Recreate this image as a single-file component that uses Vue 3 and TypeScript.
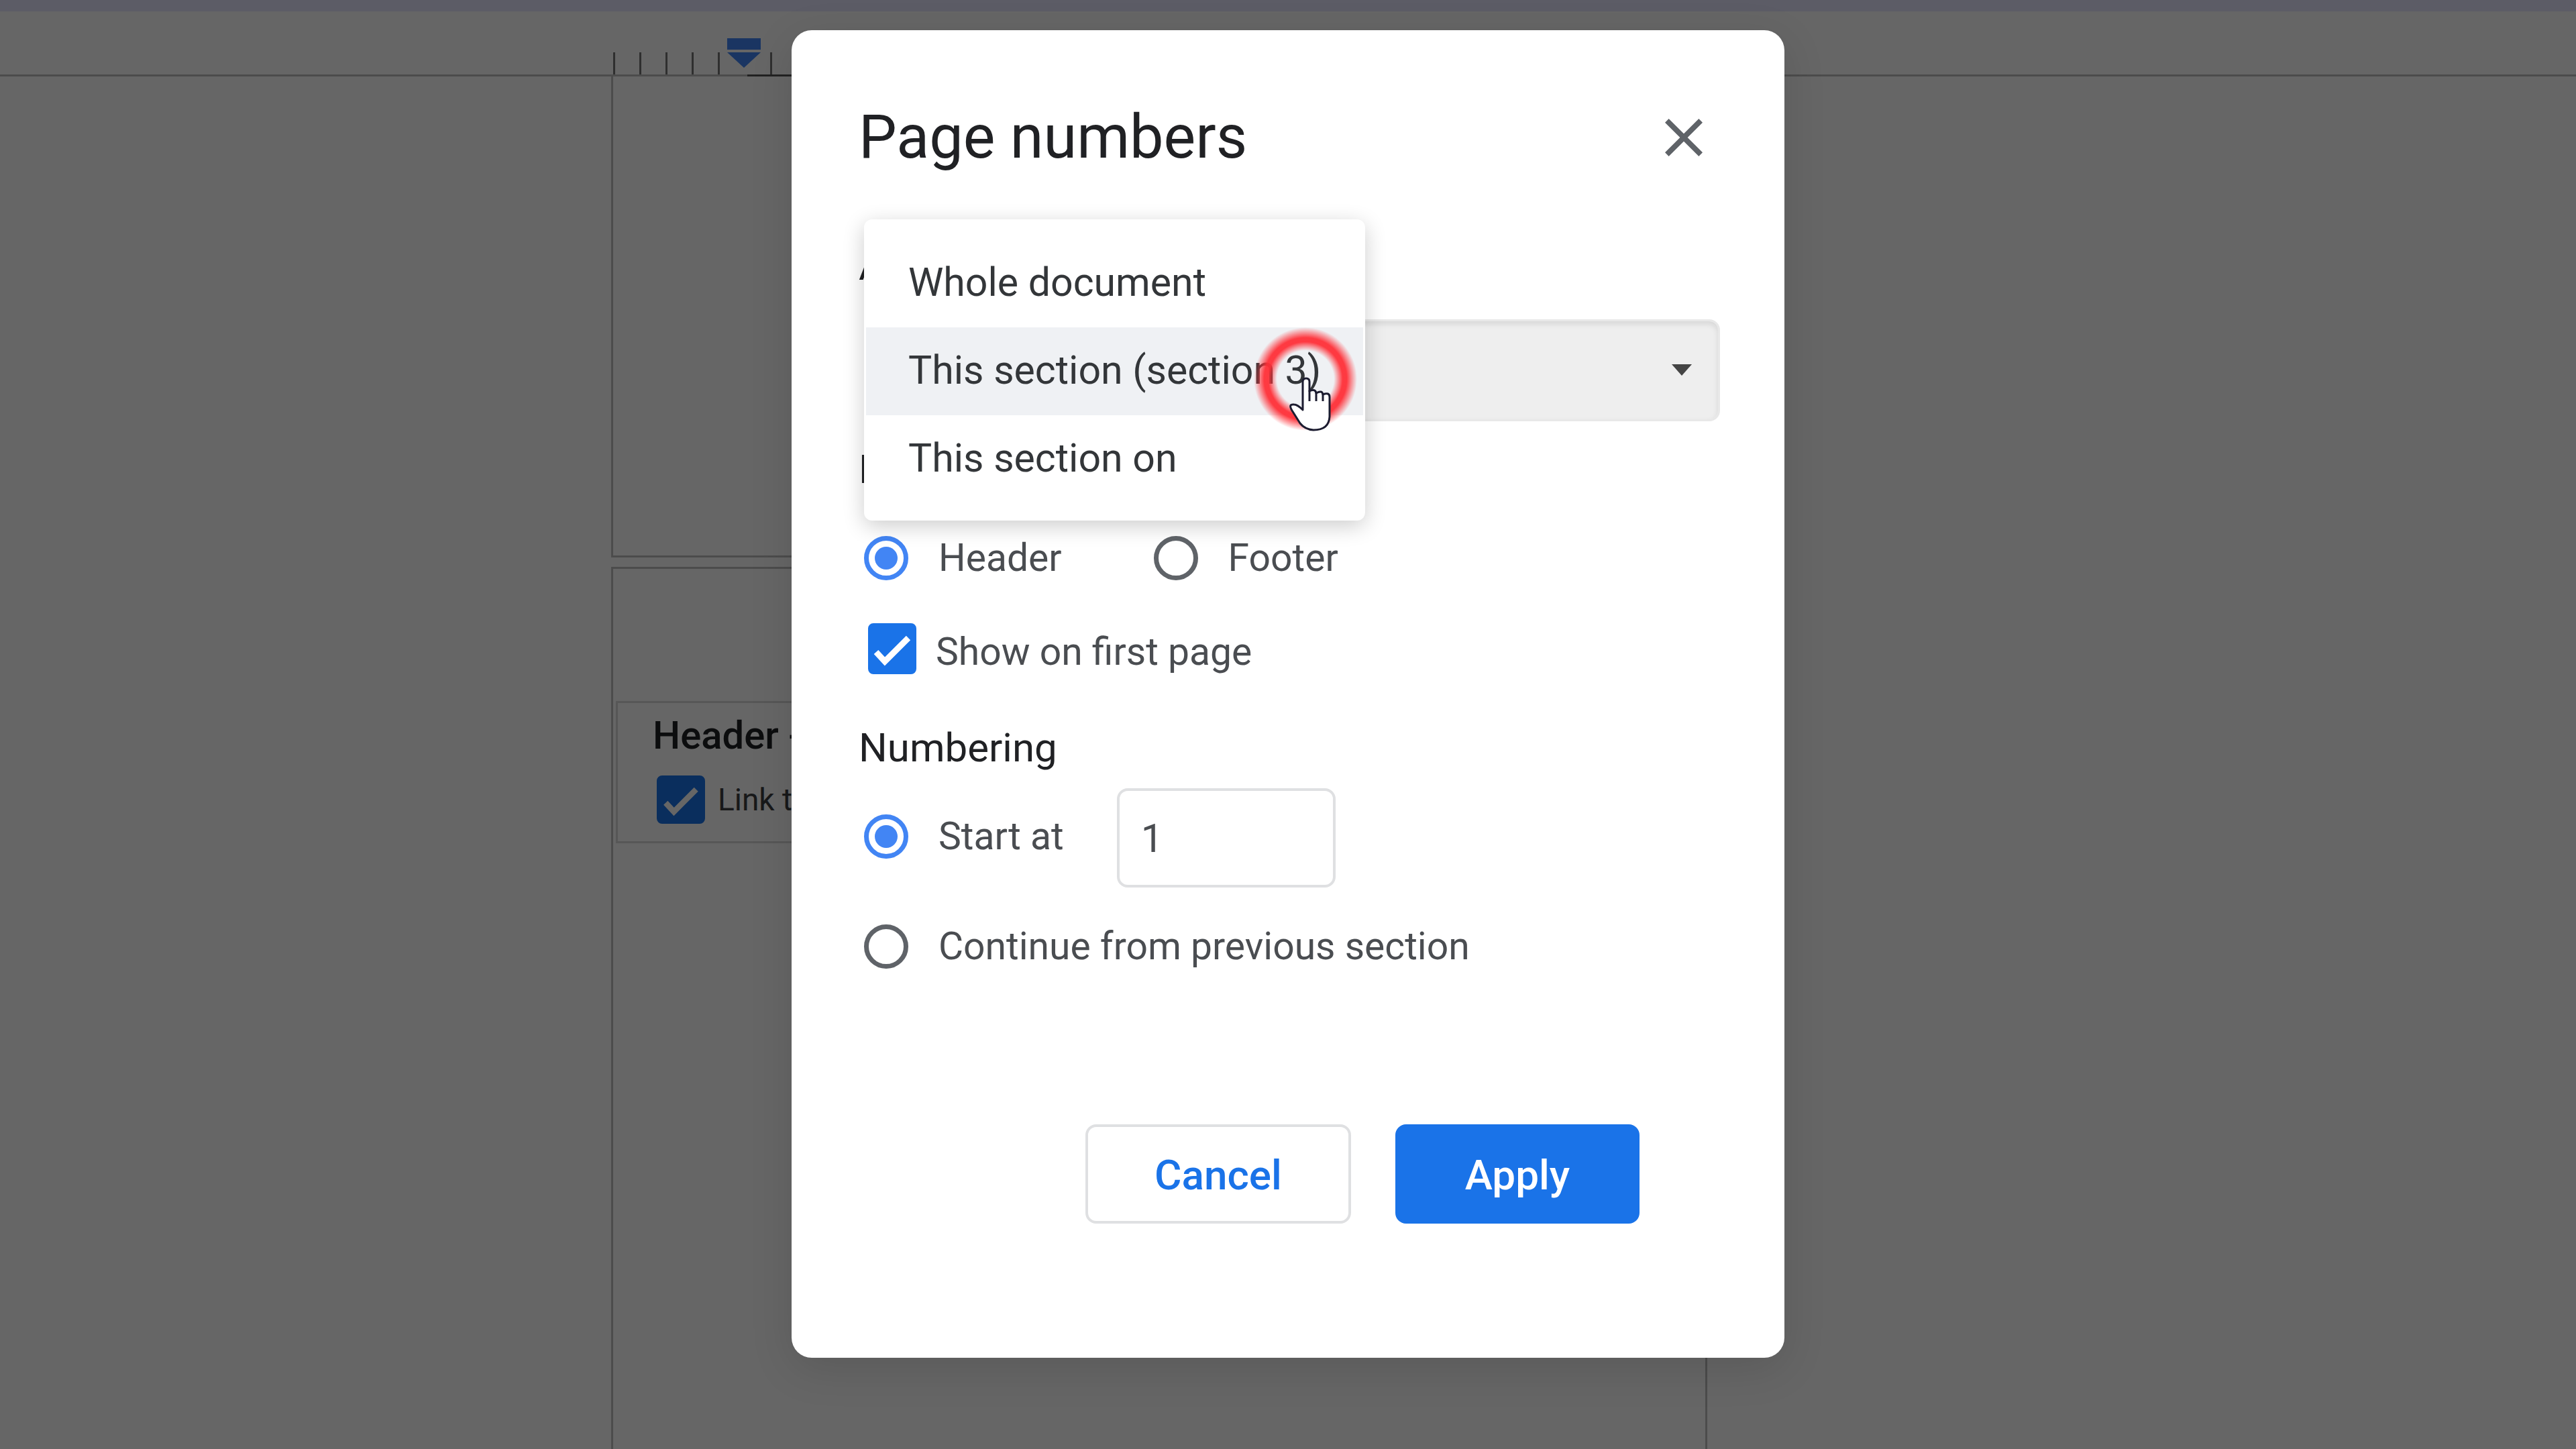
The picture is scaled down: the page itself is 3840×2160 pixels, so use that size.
<script setup lang="ts">
import { ref } from 'vue'

type Scope = 'whole' | 'section' | 'onward'

const scopes: { value: Scope; label: string }[] = [
  { value: 'whole', label: 'Whole document' },
  { value: 'section', label: 'This section (section 3)' },
  { value: 'onward', label: 'This section on' },
]

const scope = ref<Scope>('section')
const position = ref('header')
const showOnFirst = ref(true)
const linkPrevious = ref(true)
const numbering = ref('start')
const startAt = ref('1')
const ticks = [0, 1, 2, 3, 4, 5, 6]
</script>

<template>
  <div class="screen">
    <div class="editor">
      <div class="toolbar-edge"></div>
      <div class="ruler">
        <div class="ruler-scale">
          <span v-for="t in ticks" :key="t" class="tick" :class="{ blank: t === 5 }"></span>
          <svg class="indent" viewBox="0 0 50 44" aria-hidden="true">
            <path d="M0 0H50V17H0Z M0 21H50L25 44Z" fill="#4285f4" />
          </svg>
          <span class="ruler-active"></span>
        </div>
      </div>
      <div class="canvas">
        <section class="sheet first"></section>
        <section class="sheet last">
          <div class="page-header">
            <h2 class="page-header-title">Header - Section 3</h2>
            <label class="link-row">
              <span class="check small">
                <input v-model="linkPrevious" type="checkbox" />
                <svg viewBox="0 0 72 76" aria-hidden="true"><path d="M12 43L25 57L60 22" /></svg>
              </span>
              <span>Link to previous</span>
            </label>
          </div>
        </section>
      </div>
    </div>

    <div class="backdrop">
      <form class="dialog" role="dialog" aria-labelledby="dialog-title" @submit.prevent>
        <header class="dialog-head">
          <h1 id="dialog-title">Page numbers</h1>
          <button class="close" type="button" aria-label="Close">
            <svg viewBox="0 0 24 24" aria-hidden="true">
              <path
                d="M19 6.41L17.59 5 12 10.59 6.41 5 5 6.41 10.59 12 5 17.59 6.41 19 12 13.41 17.59 19 19 17.59 13.41 12z"
                fill="#5f6368"
              />
            </svg>
          </button>
        </header>

        <label class="heading" for="scope">Apply to</label>
        <div class="scope-field">
          <select id="scope" v-model="scope">
            <option v-for="s in scopes" :key="s.value" :value="s.value">{{ s.label }}</option>
          </select>
          <svg class="caret" viewBox="0 0 30 17" aria-hidden="true">
            <path d="M0 0H30L15 17Z" fill="#444" />
          </svg>
          <div class="menu" role="listbox" aria-label="Apply to">
            <button
              v-for="s in scopes"
              :key="s.value"
              class="menu-item"
              :class="{ active: s.value === scope }"
              type="button"
              role="option"
              :aria-selected="s.value === scope"
              @click="scope = s.value"
            >
              {{ s.label }}
            </button>
            <svg class="pointer" viewBox="0 0 160 160" aria-hidden="true">
              <defs>
                <radialGradient id="click-ring" gradientUnits="userSpaceOnUse" cx="80" cy="80" r="77">
                  <stop offset="0.55" stop-color="#ff3038" stop-opacity="0" />
                  <stop offset="0.72" stop-color="#ff3038" stop-opacity="0.95" />
                  <stop offset="0.8" stop-color="#ff3038" stop-opacity="0.95" />
                  <stop offset="1" stop-color="#ff3038" stop-opacity="0" />
                </radialGradient>
              </defs>
              <circle cx="80" cy="80" r="77" fill="url(#click-ring)" />
              <path
                d="M76 126V84Q76 79 81 79Q86 79 86 84V98Q95 94 96 101Q105 96 106 103Q116 99 116 107V136Q115 156 92 156Q79 155 72 146L60 127Q54 117 63 118Q68 118 76 126Z"
                fill="#fff"
                stroke="#1c1c30"
                stroke-width="3"
                stroke-linejoin="round"
              />
              <path d="M86 97V113M96 100V113M106 102V113" fill="none" stroke="#1c1c30" stroke-width="3" />
            </svg>
          </div>
        </div>

        <h2 class="heading position-heading">Position</h2>
        <div class="row position-row">
          <label class="choice">
            <input v-model="position" type="radio" name="position" value="header" />
            <span>Header</span>
          </label>
          <label class="choice">
            <input v-model="position" type="radio" name="position" value="footer" />
            <span>Footer</span>
          </label>
        </div>
        <label class="check-row">
          <span class="check">
            <input v-model="showOnFirst" type="checkbox" />
            <svg viewBox="0 0 72 76" aria-hidden="true"><path d="M12 43L25 57L60 22" /></svg>
          </span>
          <span>Show on first page</span>
        </label>

        <h2 class="heading numbering-heading">Numbering</h2>
        <div class="row start-row">
          <label class="choice">
            <input v-model="numbering" type="radio" name="numbering" value="start" />
            <span>Start at</span>
          </label>
          <input v-model="startAt" class="number" type="text" aria-label="Start at number" />
        </div>
        <div class="row continue-row">
          <label class="choice">
            <input v-model="numbering" type="radio" name="numbering" value="continue" />
            <span>Continue from previous section</span>
          </label>
        </div>

        <footer class="actions">
          <button class="button cancel" type="button">Cancel</button>
          <button class="button apply" type="submit">Apply</button>
        </footer>
      </form>
    </div>
  </div>
</template>

<style>
body {
  background: #fff;
}
</style>

<style scoped>
.screen,
.screen * {
  box-sizing: border-box;
}

.screen {
  display: grid;
  min-height: 100vh;
  overflow: hidden;
  font-family: Roboto, "Liberation Sans", sans-serif;
  color: #3c4043;
}

h1,
h2 {
  margin: 0;
  font-weight: 500;
}

button,
input,
select {
  margin: 0;
  font-family: inherit;
}

.editor,
.backdrop {
  grid-area: 1 / 1;
  min-width: 0;
}

.editor {
  display: flex;
  flex-direction: column;
  background: #fff;
  isolation: isolate;
}

.toolbar-edge {
  height: 17px;
  background: #e6e6ff;
}

.ruler {
  display: flex;
  justify-content: center;
  align-items: flex-end;
  height: 97px;
  padding-right: 384px;
  border-bottom: 3px solid #bdbdbd;
}

.ruler-scale {
  position: relative;
  display: flex;
  width: 1634px;
  padding-left: 3px;
}

.tick {
  width: 39px;
  height: 33px;
  border-left: 3px solid #777;
}

.tick.blank {
  border-color: transparent;
}

.indent {
  position: absolute;
  left: 173px;
  bottom: 10px;
  width: 50px;
  height: 44px;
}

.ruler-active {
  position: absolute;
  left: 203px;
  right: 203px;
  bottom: -3px;
  height: 3px;
  background: #555;
}

.canvas {
  display: flex;
  flex: 1;
  flex-direction: column;
  align-items: center;
  gap: 14px;
  padding-right: 384px;
}

.sheet {
  width: 1634px;
  border: 3px solid #bdbdbd;
}

.first {
  height: 717px;
  border-top: 0;
}

.last {
  flex: 1;
  padding: 197px 0 0 4px;
  border-bottom: 0;
}

.page-header {
  display: flex;
  flex-direction: column;
  gap: 24px;
  padding: 12px 52px 26px;
  border: 3px solid #dadada;
  border-right: 0;
}

.page-header-title {
  font-size: 58px;
  line-height: 72px;
  color: #202124;
}

.link-row {
  display: flex;
  align-items: center;
  gap: 19px;
  padding-left: 6px;
  font-size: 46px;
  line-height: 72px;
}

.backdrop {
  z-index: 1;
  display: flex;
  justify-content: center;
  align-items: flex-start;
  padding-top: 45px;
  background: rgba(0, 0, 0, 0.6);
}

.dialog {
  display: flex;
  flex-direction: column;
  width: 1480px;
  max-width: 100%;
  padding: 108px 96px 200px 100px;
  border-radius: 30px;
  background: #fff;
  box-shadow: 0 16px 64px rgba(0, 0, 0, 0.12);
}

.dialog-head {
  display: flex;
  justify-content: space-between;
  align-items: center;
  margin-bottom: 104px;
}

.dialog-head h1 {
  font-size: 90px;
  font-weight: 400;
  line-height: 104px;
  color: #202124;
}

.close {
  display: flex;
  justify-content: center;
  align-items: center;
  width: 108px;
  height: 104px;
  padding: 0;
  border: 0;
  background: none;
}

.close svg {
  width: 96px;
  height: 96px;
}

.heading {
  font-size: 60px;
  font-weight: 450;
  line-height: 72px;
  color: #202124;
}

.scope-field {
  position: relative;
  display: flex;
  margin: 43px 0 0 8px;
}

.scope-field select {
  flex: 1;
  height: 152px;
  padding: 0 48px;
  border: 3px solid #e8e8e8;
  border-radius: 16px;
  appearance: none;
  background: #eee;
  box-shadow: inset 0 4px 8px rgba(0, 0, 0, 0.1);
  font-size: 57px;
  color: #3c4043;
}

.caret {
  position: absolute;
  top: 67px;
  right: 42px;
  width: 30px;
  height: 17px;
}

.menu {
  position: absolute;
  top: -149px;
  left: 0;
  display: flex;
  flex-direction: column;
  width: 747px;
  padding: 30px 3px 26px;
  border-radius: 12px;
  background: #fff;
  box-shadow: 0 8px 32px rgba(0, 0, 0, 0.2);
}

.menu-item {
  height: 131px;
  padding: 0 0 3px 63px;
  border: 0;
  background: none;
  font-size: 59px;
  line-height: 128px;
  text-align: left;
  white-space: nowrap;
  color: #333639;
}

.menu-item.active {
  background: #eff1f4;
}

.pointer {
  position: absolute;
  top: 158px;
  left: 578px;
  width: 160px;
  height: 160px;
}

.position-heading {
  margin-top: 36px;
}

.row {
  display: flex;
  align-items: center;
  padding-left: 8px;
}

.position-row {
  gap: 137px;
  margin-top: 60px;
}

.choice {
  display: flex;
  align-items: center;
  gap: 45px;
  font-size: 57px;
  line-height: 72px;
  color: #4a4d51;
}

.choice input {
  display: grid;
  place-items: center;
  width: 66px;
  height: 66px;
  border: 7px solid #5f6368;
  border-radius: 50%;
  appearance: none;
}

.choice input:checked {
  border-color: #4285f4;
}

.choice input:checked::after {
  width: 34px;
  height: 34px;
  border-radius: 50%;
  background: #4285f4;
  content: "";
}

.check-row {
  display: flex;
  align-items: flex-start;
  gap: 29px;
  margin-top: 61px;
  padding-left: 14px;
  font-size: 57px;
  line-height: 86px;
  color: #4a4d51;
}

.check {
  display: grid;
  width: 72px;
  height: 76px;
}

.check.small {
  height: 72px;
}

.check input,
.check svg {
  grid-area: 1 / 1;
  width: 100%;
  height: 100%;
}

.check input {
  border: 6px solid #5f6368;
  border-radius: 8px;
  appearance: none;
}

.check input:checked {
  border-color: #1a73e8;
  background: #1a73e8;
}

.check svg {
  pointer-events: none;
}

.check path {
  fill: none;
  stroke: #fff;
  stroke-width: 9;
}

.numbering-heading {
  margin-top: 64px;
}

.start-row {
  gap: 79px;
  margin-top: 24px;
}

.start-row .choice {
  padding-bottom: 4px;
}

.number {
  width: 326px;
  height: 148px;
  padding: 0 32px;
  border: 4px solid #dfe0e2;
  border-radius: 16px;
  background: #fff;
  font-size: 59px;
  color: #4a4d51;
}

.continue-row {
  margin-top: 52px;
}

.actions {
  display: flex;
  justify-content: flex-end;
  gap: 66px;
  margin: 229px 120px 0 0;
}

.button {
  height: 148px;
  padding: 3px 0 0;
  border: 4px solid #dfe0e2;
  border-radius: 16px;
  font-size: 62px;
  font-weight: 500;
}

.cancel {
  width: 396px;
  background: #fff;
  color: #1a73e8;
}

.apply {
  width: 364px;
  border-color: #1a73e8;
  background: #1a73e8;
  color: #fff;
}
</style>
